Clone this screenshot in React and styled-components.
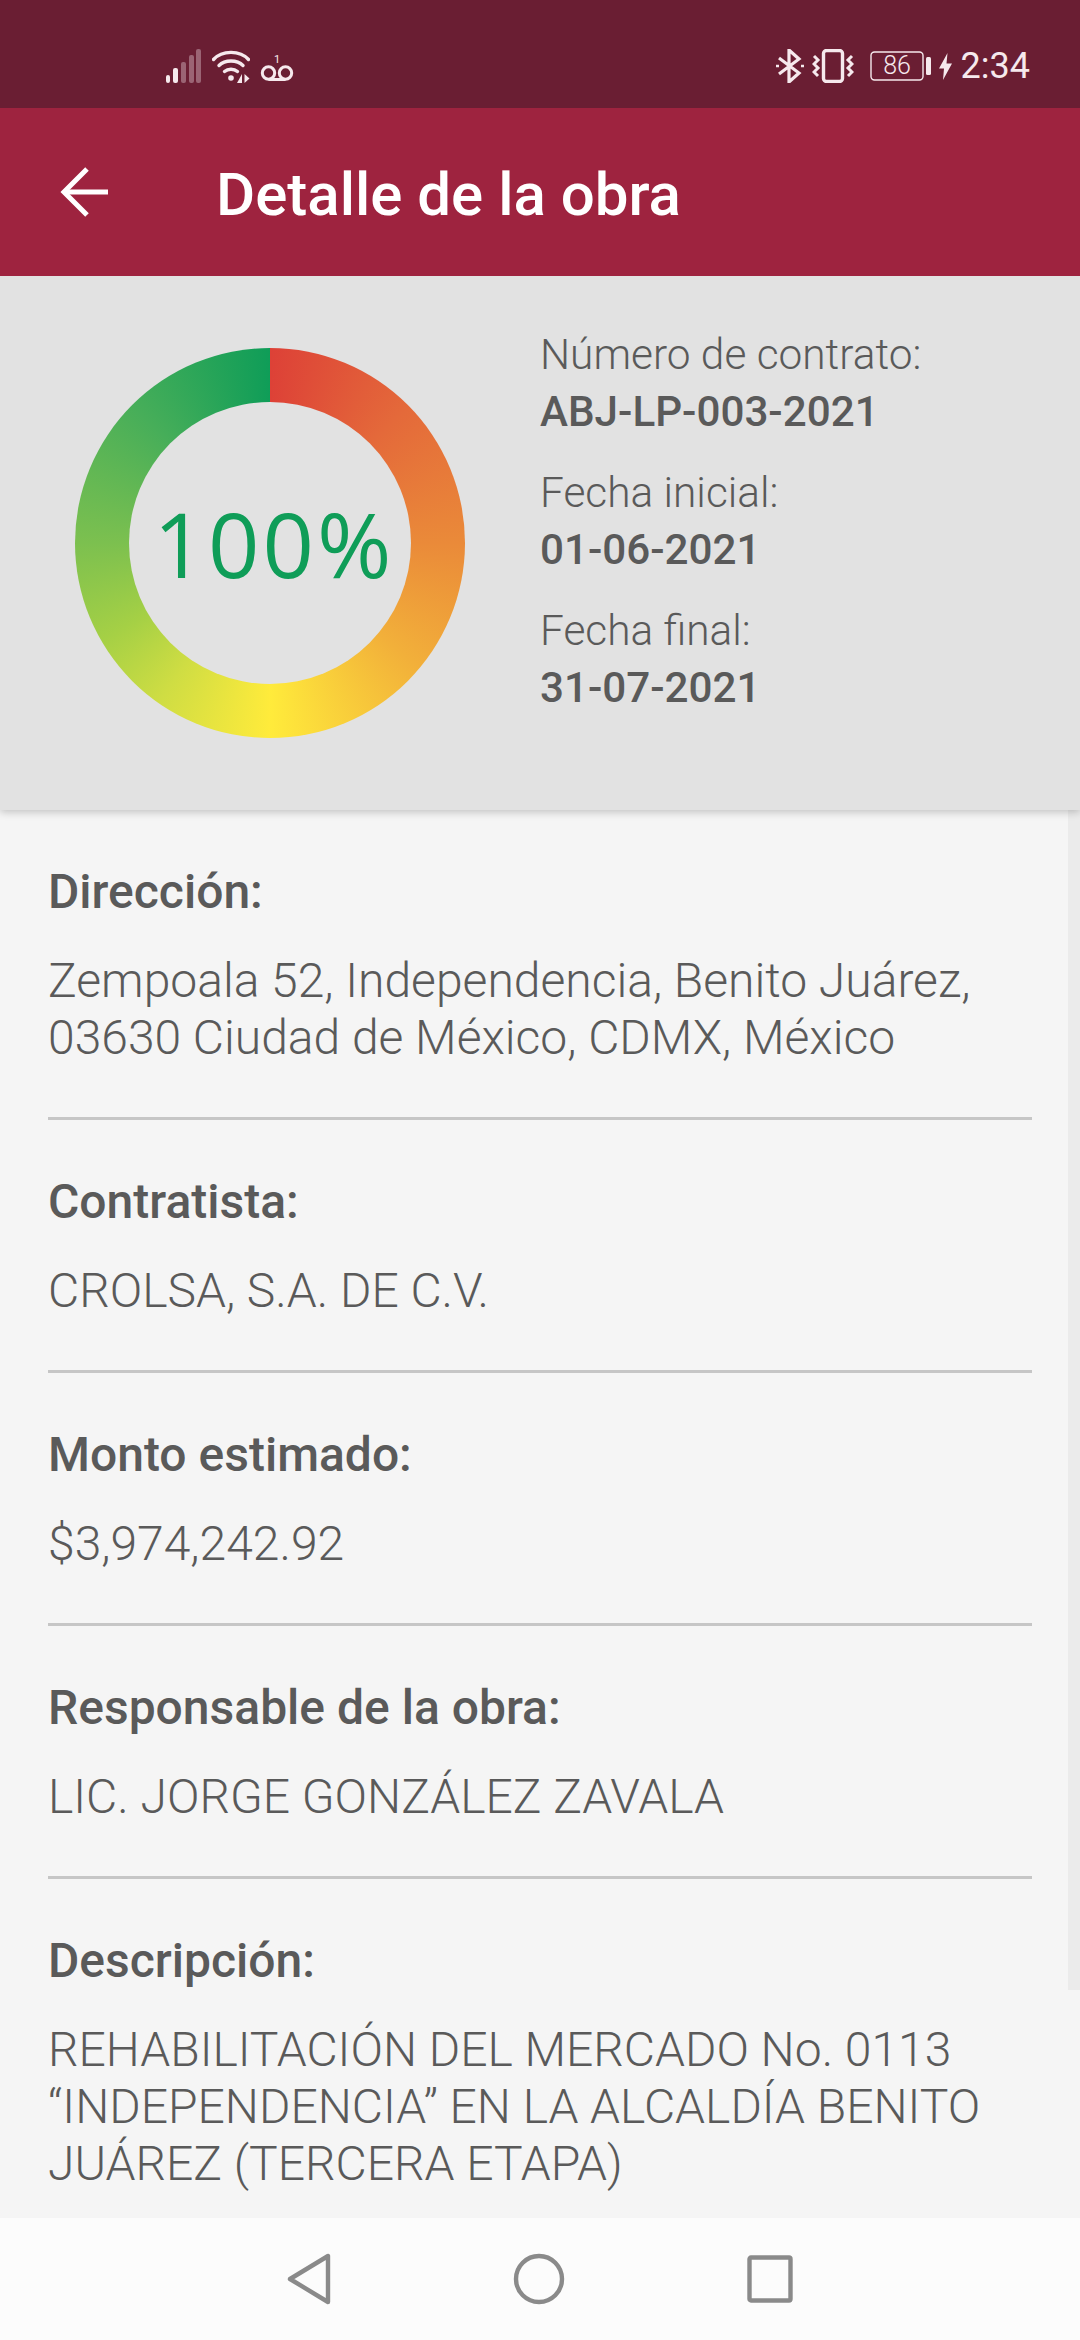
import React from "react";
import styled, { createGlobalStyle } from "styled-components";

const GlobalStyle = createGlobalStyle`
  html, body {
    margin: 0;
    padding: 0;
    background: #f5f5f5;
  }
`;

const Screen = styled.div`
  position: relative;
  display: flex;
  flex-direction: column;
  width: 1080px;
  height: 2340px;
  overflow: hidden;
  font-family: Roboto, "Liberation Sans", sans-serif;
  background: #f5f5f5;
`;

const StatusBar = styled.div`
  display: flex;
  align-items: center;
  justify-content: space-between;
  flex: 0 0 108px;
  box-sizing: border-box;
  padding: 24px 50px 0 166px;
  background: #6a1e33;
  color: #f6e9ed;
`;

const StatusGroup = styled.div`
  display: flex;
  align-items: center;
  gap: 10px;
`;

const IconSlot = styled.span`
  display: flex;
  margin-left: ${(p) => p.$ml || 0}px;
`;

const Clock = styled.span`
  margin-left: -1px;
  font-size: 36px;
  font-weight: 400;
  line-height: 40px;
`;

const AppBar = styled.header`
  position: relative;
  z-index: 3;
  display: flex;
  align-items: center;
  flex: 0 0 168px;
  padding: 0 0 0 58px;
  background: #9e233f;
  color: #fff;
`;

const Title = styled.h1`
  margin: 6px 0 0 106px;
  font-size: 60px;
  font-weight: 500;
  line-height: 64px;
`;

const Summary = styled.section`
  position: relative;
  z-index: 2;
  display: flex;
  flex: 0 0 534px;
  box-sizing: border-box;
  padding: 72px 0 0 75px;
  background: #e2e2e2;
  box-shadow: 0 2px 8px rgba(0, 0, 0, 0.22);
`;

const Ring = styled.div`
  position: relative;
  flex: 0 0 390px;
  height: 390px;
  border-radius: 50%;
  background: conic-gradient(
    #dd4137 0deg,
    #e4693a 45deg,
    #ea8a39 90deg,
    #f2b03a 130deg,
    #ffeb3b 180deg,
    #cfdd43 215deg,
    #a5d045 240deg,
    #7cc04f 270deg,
    #47ae59 315deg,
    #0f9d58 360deg
  );
`;

const RingHole = styled.div`
  position: absolute;
  inset: 54px;
  display: flex;
  align-items: center;
  justify-content: center;
  box-sizing: border-box;
  padding-left: 8px;
  border-radius: 50%;
  background: #e2e2e2;
  color: #0f9d58;
  font-family: "Open Sans", "Noto Sans", sans-serif;
  font-size: 90px;
  font-weight: 400;
  letter-spacing: 3px;
  line-height: 1;
`;

const Dates = styled.div`
  display: flex;
  flex-direction: column;
  gap: 24px;
  margin: -22px 0 0 75px;
`;

const DateBlock = styled.div`
  display: flex;
  flex-direction: column;
`;

const SmallLabel = styled.span`
  color: #5a5a5a;
  font-size: 42.4px;
  font-weight: 300;
  line-height: 57px;
`;

const SmallValue = styled.span`
  color: #5a5a5a;
  font-size: 42.2px;
  font-weight: 500;
  line-height: 57px;
`;

const Details = styled.main`
  flex: 1;
  min-height: 0;
  overflow: hidden;
  padding: 53px 48px 0;
`;

const Field = styled.div`
  padding-bottom: 51px;
  margin-bottom: 53px;
  border-bottom: ${(p) => (p.$last ? "none" : "3px solid #c6c6c6")};
`;

const FieldLabel = styled.div`
  color: #5a5a5a;
  font-size: 48px;
  font-weight: 500;
  line-height: 57px;
  margin-bottom: 32px;
`;

const FieldValue = styled.div`
  color: #5a5a5a;
  font-size: 48px;
  font-weight: 300;
  line-height: 57px;
`;

const Scrollbar = styled.div`
  position: absolute;
  top: 810px;
  right: 0;
  width: 12px;
  height: 1180px;
  background: #ebebeb;
`;

const NavBar = styled.nav`
  display: flex;
  align-items: center;
  justify-content: center;
  gap: 182px;
  flex: 0 0 122px;
  background: #fcfcfc;
  color: #8a8a8a;
`;

const Signal = () => (
  <svg width="36" height="34" viewBox="0 0 36 34" fill="currentColor">
    <rect x="0" y="26" width="4" height="8" rx="2" />
    <rect x="7" y="19" width="5" height="15" rx="2" />
    <rect x="15" y="13" width="5" height="21" rx="2" opacity="0.35" />
    <rect x="23" y="6" width="5" height="28" rx="2" opacity="0.35" />
    <rect x="30" y="0" width="5" height="34" rx="2" opacity="0.35" />
  </svg>
);

const Wifi = () => (
  <svg width="38" height="34" viewBox="0 0 38 34" fill="none" stroke="currentColor" strokeWidth="3.4" strokeLinecap="round">
    <path d="M1.5 10.5 C10 1 28 1 36.5 10.5" />
    <path d="M7 16.5 C13 10.5 25 10.5 31 16.5" />
    <path d="M12.5 22.5 C16 19.5 22 19.5 25.5 22.5" />
    <circle cx="19" cy="29" r="2.8" fill="currentColor" stroke="none" />
    <path d="M30 25 V34 L25 34 Z" fill="currentColor" stroke="none" />
    <path d="M32.5 25 V34 L37.5 29.5 Z" fill="currentColor" stroke="none" />
  </svg>
);

const Voicemail = () => (
  <svg width="34" height="34" viewBox="0 0 34 34" fill="none" stroke="currentColor" strokeWidth="3">
    <circle cx="8.5" cy="24" r="6.2" />
    <circle cx="25.5" cy="24" r="6.2" />
    <path d="M8.5 30.5 H25.5" />
    <text x="17" y="14" textAnchor="middle" fontSize="11" fontFamily="Roboto, sans-serif" fill="currentColor" stroke="none">1</text>
  </svg>
);

const Bluetooth = () => (
  <svg width="28" height="34" viewBox="0 0 28 34" fill="none" stroke="currentColor" strokeWidth="3.2">
    <path d="M3 9 L23 24 L13 33 V1 L23 10 L3 25" />
    <path d="M25 17 H28" strokeWidth="2.5" />
    <path d="M0 17 H3" strokeWidth="2.5" />
  </svg>
);

const Vibrate = () => (
  <svg width="42" height="34" viewBox="0 0 42 34" fill="none" stroke="currentColor">
    <rect x="11.5" y="1.5" width="19" height="31" rx="3" strokeWidth="3.4" />
    <path d="M2 7 L6 11 L2 15 L6 19 L2 23 L6 27" strokeWidth="3" />
    <path d="M40 7 L36 11 L40 15 L36 19 L40 23 L36 27" strokeWidth="3" />
  </svg>
);

const Battery = () => (
  <svg width="62" height="30" viewBox="0 0 62 30" fill="none">
    <rect x="1" y="1" width="52" height="28" rx="3.5" stroke="currentColor" strokeWidth="1.4" />
    <text x="27" y="23" textAnchor="middle" fontSize="25" fontFamily="Roboto, sans-serif" fontWeight="300" fill="currentColor">86</text>
    <rect x="56" y="6" width="5" height="18" rx="1.5" fill="currentColor" />
  </svg>
);

const Bolt = () => (
  <svg width="13" height="27" viewBox="0 0 13 27" fill="currentColor">
    <path d="M8.5 0 L0 15.5 H5 L4 27 L13 10.5 H7.5 Z" />
  </svg>
);

const BackArrow = () => (
  <svg width="52" height="50" viewBox="0 0 52 50" fill="none" stroke="currentColor" strokeWidth="5">
    <path d="M50 25 H6" />
    <path d="M29 2 L6 25 L29 48" />
  </svg>
);

const NavBack = () => (
  <svg width="44" height="52" viewBox="0 0 44 52" fill="none" stroke="currentColor" strokeWidth="4.4" strokeLinejoin="round">
    <path d="M41 3 V49 L3 26 Z" />
  </svg>
);

const NavHome = () => (
  <svg width="52" height="52" viewBox="0 0 52 52" fill="none" stroke="currentColor" strokeWidth="4.4">
    <circle cx="26" cy="26" r="23" />
  </svg>
);

const NavRecent = () => (
  <svg width="46" height="48" viewBox="0 0 46 48" fill="none" stroke="currentColor" strokeWidth="4.4" strokeLinejoin="round">
    <rect x="2.5" y="2.5" width="41" height="43" rx="1.5" />
  </svg>
);

const fields = [
  {
    label: "Dirección:",
    value: (
      <>
        Zempoala 52, Independencia, Benito Juárez,
        <br />
        03630 Ciudad de México, CDMX, México
      </>
    ),
  },
  { label: "Contratista:", value: "CROLSA, S.A. DE C.V." },
  { label: "Monto estimado:", value: "$3,974,242.92" },
  { label: "Responsable de la obra:", value: "LIC. JORGE GONZÁLEZ ZAVALA" },
  {
    label: "Descripción:",
    value: (
      <>
        REHABILITACIÓN DEL MERCADO No. 0113
        <br />
        “INDEPENDENCIA” EN LA ALCALDÍA BENITO
        <br />
        JUÁREZ (TERCERA ETAPA)
      </>
    ),
  },
];

const dates = [
  { label: "Número de contrato:", value: "ABJ-LP-003-2021" },
  { label: "Fecha inicial:", value: "01-06-2021" },
  { label: "Fecha final:", value: "31-07-2021" },
];

const App = () => {
  return (
    <Screen>
      <GlobalStyle />
      <StatusBar>
        <StatusGroup>
          <Signal />
          <Wifi />
          <Voicemail />
        </StatusGroup>
        <StatusGroup>
          <Bluetooth />
          <IconSlot $ml={-2}>
            <Vibrate />
          </IconSlot>
          <IconSlot $ml={6}>
            <Battery />
          </IconSlot>
          <IconSlot $ml={-3}>
            <Bolt />
          </IconSlot>
          <Clock>2:34</Clock>
        </StatusGroup>
      </StatusBar>
      <AppBar>
        <BackArrow />
        <Title>Detalle de la obra</Title>
      </AppBar>
      <Summary>
        <Ring>
          <RingHole>100%</RingHole>
        </Ring>
        <Dates>
          {dates.map((item) => (
            <DateBlock key={item.label}>
              <SmallLabel>{item.label}</SmallLabel>
              <SmallValue>{item.value}</SmallValue>
            </DateBlock>
          ))}
        </Dates>
      </Summary>
      <Details>
        {fields.map((item, i) => (
          <Field key={item.label} $last={i === fields.length - 1}>
            <FieldLabel>{item.label}</FieldLabel>
            <FieldValue>{item.value}</FieldValue>
          </Field>
        ))}
      </Details>
      <Scrollbar />
      <NavBar>
        <NavBack />
        <NavHome />
        <NavRecent />
      </NavBar>
    </Screen>
  );
};

export default App;
